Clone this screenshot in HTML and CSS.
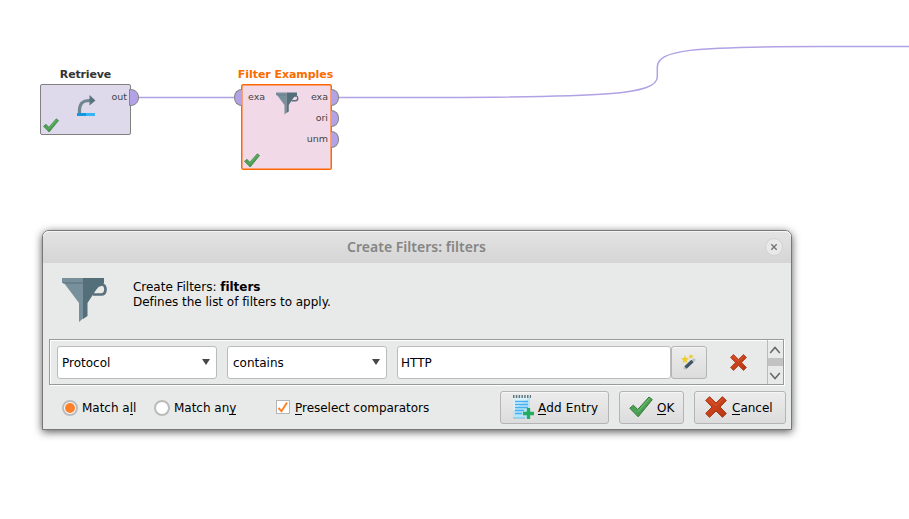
FILE: index.html
```
<!DOCTYPE html>
<html lang="en">
<head>
<meta charset="utf-8">
<title>Create Filters: filters</title>
<link rel="stylesheet" href="styles.css">
</head>
<body>
<svg class="defs" width="0" height="0" aria-hidden="true">
  <defs>
    <linearGradient id="green" x1="0" y1="0" x2="1" y2="1"><stop offset="0" stop-color="#459a4c"/><stop offset=".5" stop-color="#4fa556"/><stop offset="1" stop-color="#357f3c"/></linearGradient>
    <linearGradient id="red" x1="0" y1="0" x2="1" y2="1"><stop offset="0" stop-color="#d84a22"/><stop offset="1" stop-color="#b53714"/></linearGradient>
  </defs>
  <symbol id="funnel" viewBox="0 0 46 46">
    <path d="M37 8.500L40 7.300C42.500 8 43.500 10 43.500 12.500C43.500 16 42 17.500 39 17.500H31" fill="none" stroke="#5a707c" stroke-width="2.700"/>
    <path d="M0 1h21v40.500l-4 3.500V26L2 6H0z" fill="#78909c"/>
    <path d="M21 1h21v5l-2 2.500-3 1L34 13l-8.500 13v13L21 42z" fill="#546e7a"/>
    <path d="M1 6h20" stroke="#5a707c" stroke-width="1"/>
  </symbol>
  <symbol id="check" viewBox="0 0 24 22">
    <path d="M.8 12.200l3.500-3 4.500 4.300L20 1l3.300 2.600L9.200 20.800z" fill="url(#green)" stroke="#347a3a" stroke-width="1"/>
    <path d="M9 15.500L20.300 2.500" stroke="#72c077" stroke-width="1"/>
  </symbol>
  <symbol id="cross" viewBox="0 0 22 22">
    <path d="M4.500.7L11 7l6.500-6.300 3.800 3.800L15 11l6.300 6.500-3.800 3.800L11 15l-6.500 6.300-3.800-3.800L7 11 .7 4.500z" fill="url(#red)" stroke="#a63612" stroke-width="1"/>
    <path d="M4.500 3l6.500 6.500L17.500 3" fill="none" stroke="#e06a40" stroke-width=".7"/>
  </symbol>
</svg>

<main class="canvas">
  <svg class="wires" width="909" height="230" viewBox="0 0 909 230">
    <path d="M137 97.500H235M338 97.500H440C600 97 657 95 657.300 77V67C658 50 690 46.500 820 46.500H909"/>
  </svg>

  <section class="node retrieve">
    <h2>Retrieve</h2>
    <div class="node-body">
      <svg class="node-icon" width="20" height="21" viewBox="0 0 20 21"><path d="M3.500 18C3 9 6 5.500 14 5.500" fill="none" stroke="#708792" stroke-width="3.200"/><path d="M13.500 0l6 5.500-6 5z" fill="#5b737f"/><path d="M1 18h9v3H1z" fill="#1496e0"/><path d="M10 18h9v3h-9z" fill="#36b4f3"/></svg>
      <ul class="ports out"><li>out</li></ul>
      <svg class="status" width="16" height="15"><use href="#check"/></svg>
    </div>
  </section>

  <section class="node filter">
    <h2>Filter Examples</h2>
    <div class="node-body">
      <ul class="ports in"><li>exa</li></ul>
      <svg class="node-icon" width="23" height="23"><use href="#funnel"/></svg>
      <ul class="ports out"><li>exa</li><li>ori</li><li>unm</li></ul>
      <svg class="status" width="16" height="15"><use href="#check"/></svg>
    </div>
  </section>

  <div class="dialog" role="dialog">
    <header class="titlebar">
      <h1>Create Filters: filters</h1>
      <button class="close" aria-label="Close"><svg width="8" height="8" viewBox="0 0 8 8"><path d="M1.300 1.300l5.400 5.400M6.700 1.300L1.300 6.700"/></svg></button>
    </header>
    <div class="intro">
      <svg width="46" height="46"><use href="#funnel"/></svg>
      <p>Create Filters: <b>filters</b><br>Defines the list of filters to apply.</p>
    </div>
    <div class="list">
      <div class="field combo"><span>Protocol</span><i></i></div>
      <div class="field combo"><span>contains</span><i></i></div>
      <div class="field text"><span>HTTP</span></div>
      <button class="button wand" aria-label="Choose value">
        <svg width="16" height="17" viewBox="0 0 16 17"><path d="M3 15l11-10" stroke="#b9c5cb" stroke-width="3"/><path d="M4.500 13.500l7-6.500" stroke="#435562" stroke-width="3.200"/><path d="M4 1l1 3 3 .2-2.300 2 .8 3L4 7.500 1.500 9.200l.8-3L0 4.200 3 4zM10 0l.7 1.500 1.800.2-1.300 1.200.4 1.700L10 3.800l-1.600.8.4-1.700-1.300-1.200 1.800-.2z" fill="#efcc26"/></svg>
      </button>
      <span class="remove"><svg width="17" height="17"><use href="#cross"/></svg></span>
      <div class="scrollbar">
        <svg width="12" height="8" viewBox="0 0 12 8"><path d="M1.200 7L6 1.500 10.800 7"/></svg>
        <span class="thumb"></span>
        <svg width="12" height="8" viewBox="0 0 12 8"><path d="M1.200 1L6 6.500 10.800 1"/></svg>
      </div>
    </div>
    <footer class="actions">
      <label class="option all"><span class="radio on"></span><span class="caption">Match a<u>l</u>l</span></label>
      <label class="option any"><span class="radio"></span><span class="caption">Match an<u>y</u></span></label>
      <label class="option pre"><span class="box"><svg width="12" height="12" viewBox="0 0 12 12"><path d="M1.500 7l3 3.200L10 1.500"/></svg></span><span class="caption"><u>P</u>reselect comparators</span></label>
      <button class="button add">
        <svg width="22" height="26" viewBox="0 0 22 26"><path d="M1 3h17v21H1z" fill="#b8e4f8"/><path d="M1 3h17L1 17z" fill="#d8f1fb"/><path d="M3 7.500h13M3 10.500h13M3 13.500h13M3 16.500h9M3 19.500h7" stroke="#48b0ee" stroke-width="1.500"/><path d="M1 24h12" stroke="#6bbce4"/><path d="M1 2.500h18" stroke="#607782" stroke-width="3" stroke-dasharray="1.500 1.300"/><path d="M16.500 14v11M11 19.500h11" stroke="#22ad61" stroke-width="3.300"/></svg>
        <span class="caption"><u>A</u>dd Entry</span>
      </button>
      <button class="button ok"><svg width="24" height="22"><use href="#check"/></svg><span class="caption"><u>O</u>K</span></button>
      <button class="button cancel"><svg width="22" height="22"><use href="#cross"/></svg><span class="caption"><u>C</u>ancel</span></button>
    </footer>
  </div>
</main>
</body>
</html>
```
FILE: styles.css
```
* { box-sizing: border-box; }
body { margin: 0; background: #fff; color: #000; font: 12px/15px "DejaVu Sans", sans-serif; overflow: hidden; }
.defs { position: absolute; }
h1, h2, p, ul { margin: 0; padding: 0; }
ul { list-style: none; }
svg { display: block; flex: none; }
u { text-decoration: none; box-shadow: inset 0 -1px #000; }
.canvas { position: relative; width: 909px; height: 519px; overflow: hidden; }
.wires { position: absolute; left: 0; top: 0; fill: none; stroke: #b1a2e5; stroke-width: 1.5; }

.node { position: absolute; width: 91px; }
.retrieve { left: 40px; top: 66px; }
.filter { left: 241px; top: 66px; }
.node h2 { height: 18px; margin: 0 -10px; text-align: center; white-space: nowrap; font: bold 11px/17px "DejaVu Sans", sans-serif; letter-spacing: -.15px; color: #333; }
.filter h2 { margin-left: -12px; letter-spacing: -.05px; color: #f86c00; }
.node-body { position: relative; height: 51px; border: 1px solid #808080; border-radius: 2px; background: #dedaeb; }
.filter .node-body { height: 86px; border-color: #ff6600; box-shadow: inset 0 0 0 .5px #ff6600; background: #f1d9e7; }
.node-icon, .status { position: absolute; }
.retrieve .node-icon { left: 35px; top: 10px; }
.filter .node-icon { left: 34px; top: 7px; }
.status { left: 2px; bottom: 1px; }
.ports { position: absolute; top: 2px; font-size: 9.5px; color: #444; }
.ports.out { right: 3px; text-align: right; }
.ports.in { left: 6px; }
.ports li { position: relative; height: 21px; line-height: 20px; }
.ports li::after { content: ""; position: absolute; top: 2px; width: 8px; height: 15px; border: 1px solid #858585; background: #b3a3e6; }
.ports.out li::after { left: calc(100% + 2px); border-radius: 0 8px 8px 0; }
.filter .ports.out li::after { width: 7px; left: calc(100% + 3px); border-left: 0; }
.ports.in li::after { width: 7px; right: calc(100% + 6px); border-right: 0; border-radius: 8px 0 0 8px; }

.dialog { position: absolute; left: 42px; top: 230px; width: 750px; height: 200px; display: flex; flex-direction: column; border: 1px solid #777; border-radius: 7px 7px 0 0; background: #e8eae9; box-shadow: 0 2px 9px rgba(0,0,0,.65); }
.titlebar { position: relative; flex: 0 0 32px; display: flex; align-items: center; justify-content: center; border-radius: 6px 6px 0 0; background: linear-gradient(#e3e3e3, #d5d5d5); box-shadow: inset 0 1px #f5f5f5; }
h1 { font: 600 14px/20px "Noto Sans", sans-serif; color: #858585; letter-spacing: .03px; margin-left: -1px; }
.close { position: absolute; right: 8px; top: 7px; display: grid; place-items: center; width: 18px; height: 18px; padding: 0; border: 1px solid #d2d2d2; border-radius: 50%; background: #e8e8e8; }
.close path { stroke: #757579; stroke-width: 1.4; }
.intro { display: flex; height: 76px; padding: 14px 0 0 19px; gap: 25px; }
.intro p { padding-top: 3px; letter-spacing: -.02px; }
.list { display: flex; align-items: center; height: 46px; margin: 0 7px 0 6px; padding-left: 7px; border: 1px solid #999; box-shadow: 1px 1px #fff, inset 1px 1px #fff; }
.field { display: flex; align-items: center; height: 33px; border: 1px solid #bbb; border-radius: 3px; background: #fff; }
.field span { padding-top: 2px; }
.combo { width: 160px; padding: 0 6px 0 4px; margin-right: 10px; justify-content: space-between; }
.combo + .combo { padding-left: 5px; }
.combo i { border: 4.500px solid transparent; border-top: 6px solid #484848; border-bottom: 0; }
.text { width: 274px; padding-left: 3px; }
.button { display: flex; align-items: center; height: 33px; padding: 0; border: 1px solid #b4b4b4; border-radius: 3px; background: linear-gradient(#ececec, #dcdcdc); box-shadow: inset 0 1px #f6f6f6; color: #000; font: inherit; white-space: nowrap; }
.wand { width: 36px; justify-content: center; }
.remove { width: 60px; padding-left: 23px; }
.scrollbar { width: 16px; height: 44px; display: flex; flex-direction: column; align-items: center; justify-content: space-between; padding: 6px 0 4px; border-left: 1px solid #bbb; }
.scrollbar path { fill: none; stroke: #666; stroke-width: 1.5; }
.scrollbar svg { margin-left: -1px; }
.thumb { width: 15px; height: 8px; margin-top: -2px; background: #c2c2c2; }
.actions { display: flex; align-items: center; height: 33px; margin: 6px 5px 0 19px; }
.option { display: flex; align-items: center; white-space: nowrap; letter-spacing: -.02px; }
.caption { padding-top: 2px; }
.all { width: 92px; }
.any { width: 121px; }
.pre { width: 225px; flex: none; }
.radio { display: grid; place-items: center; width: 16px; height: 16px; margin-right: 4px; border: 2px solid #bbb; border-radius: 50%; background: #fff; }
.radio.on::after { content: ""; width: 10px; height: 10px; border-radius: 50%; background: #ff7f2a; }
.box { display: grid; place-items: center; width: 14px; height: 14px; margin: -1px 5px 0 1px; border: 1px solid #b5b5b5; background: #fff; }
.box path { fill: none; stroke: #ff7f2a; stroke-width: 2; }
.add { width: 109px; margin-right: 10px; padding-left: 11px; gap: 4px; letter-spacing: .15px; }
.add svg { margin-top: -1px; }
.ok { width: 65px; margin-right: 10px; padding-left: 9px; gap: 4px; }
.cancel { width: 92px; padding-left: 10px; gap: 5px; }
.ok svg, .cancel svg { margin-top: -1px; }
```
